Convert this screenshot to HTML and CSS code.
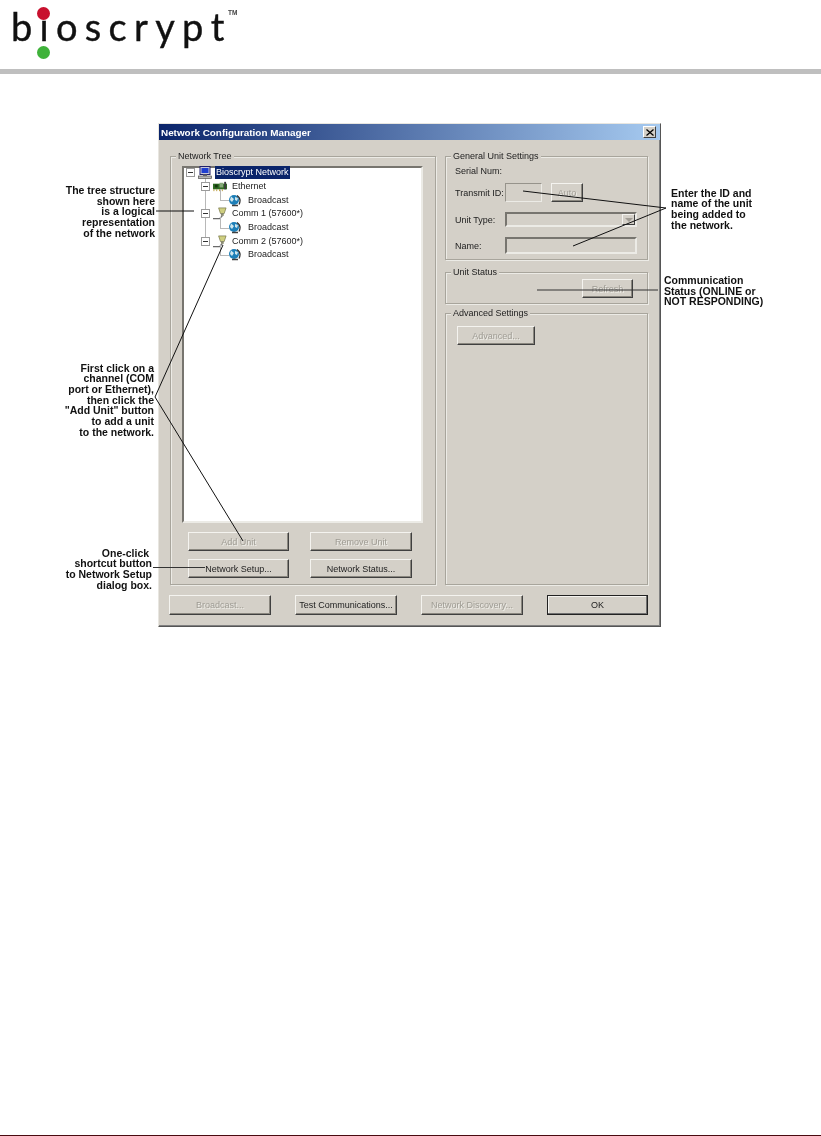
FILE: index.html
```html
<!DOCTYPE html>
<html lang="en">
<head>
    <meta charset="UTF-8">
    <meta name="viewport" content="width=device-width, initial-scale=1.0">
    <title>Network Configuration Manager</title>
    <link rel="stylesheet" href="styles.css">
</head>
<body>
<div class="page">
    <svg class="icon-defs" width="0" height="0">
        <symbol id="icon-computer" viewBox="0 0 14 13">
            <rect x="2" y="0.5" width="10" height="8" fill="#c8c8d8" stroke="#20206a"/>
            <rect x="3.5" y="2" width="7" height="5" fill="#1f3fd0"/>
            <rect x="5" y="8.5" width="4" height="1.5" fill="#707070"/>
            <rect x="0.5" y="10" width="13" height="2.5" fill="#b8b8b8" stroke="#505050" stroke-width="0.7"/>
        </symbol>
        <symbol id="icon-card" viewBox="0 0 15 10">
            <rect x="0" y="2" width="15" height="6" fill="#2e6b22"/>
            <rect x="2" y="3" width="3" height="3" fill="#14360f"/>
            <rect x="7" y="1" width="4" height="5" fill="#85a878"/>
            <rect x="12" y="0" width="2" height="8" fill="#3b3b3b"/>
            <path d="M1 8v2M4 8v2M7 8v2M10 8v2" stroke="#b99a36"/>
        </symbol>
        <symbol id="icon-plug" viewBox="0 0 15 13">
            <path d="M6 0.500h8l-2 6h-4z" fill="#cfcf80" stroke="#6f6f40" stroke-width="0.7"/>
            <rect x="8.500" y="6" width="3" height="3" fill="#8a8a70"/>
            <path d="M10 9 7 12H0" fill="none" stroke="#6a6a6a" stroke-width="1.300"/>
        </symbol>
        <symbol id="icon-globe" viewBox="0 0 14 13">
            <circle cx="6" cy="6" r="5" fill="#1d7fb8"/>
            <path d="M3 2.500 6 5 4 8 2 6zM7 3l3 1-1 3-2-1z" fill="#cfe6ee"/>
            <path d="M9 1.500c3 2 4 5 2 9" fill="none" stroke="#2a2a2a" stroke-width="1.200"/>
            <path d="M4 11.500h6" stroke="#404040" stroke-width="1.500"/>
        </symbol>
    </svg>

    <header class="brand">
        <div class="logo">
            <span class="logo-word">bioscryp<span class="logo-end">t</span></span>
            <span class="logo-dot logo-dot-red"></span>
            <span class="logo-dot logo-dot-green"></span>
            <span class="logo-tm">TM</span>
        </div>
    </header>

    <main class="figure">
        <div class="dialog">
            <div class="titlebar">
                <span class="title">Network Configuration Manager</span>
                <span class="close">
                    <svg width="8" height="7" viewBox="0 0 8 7"><path d="M0.500 0.500 7.500 6.500M7.500 0.500 0.500 6.500" stroke="#000" stroke-width="1.300"/></svg>
                </span>
            </div>
            <div class="dialog-body">
                <div class="columns">
                    <section class="group group-tree">
                        <span class="legend">Network Tree</span>
                        <div class="tree">
                            <ul class="tree-list">
                                <li class="node level-1">
                                    <span class="toggle"></span>
                                    <svg class="node-icon"><use href="#icon-computer"/></svg>
                                    <span class="node-label selected">Bioscrypt Network</span>
                                </li>
                                <li class="node level-2">
                                    <span class="toggle"></span>
                                    <svg class="node-icon"><use href="#icon-card"/></svg>
                                    <span class="node-label">Ethernet</span>
                                </li>
                                <li class="node level-3">
                                    <svg class="node-icon"><use href="#icon-globe"/></svg>
                                    <span class="node-label">Broadcast</span>
                                </li>
                                <li class="node level-2">
                                    <span class="toggle"></span>
                                    <svg class="node-icon"><use href="#icon-plug"/></svg>
                                    <span class="node-label">Comm 1 (57600*)</span>
                                </li>
                                <li class="node level-3">
                                    <svg class="node-icon"><use href="#icon-globe"/></svg>
                                    <span class="node-label">Broadcast</span>
                                </li>
                                <li class="node level-2">
                                    <span class="toggle"></span>
                                    <svg class="node-icon"><use href="#icon-plug"/></svg>
                                    <span class="node-label">Comm 2 (57600*)</span>
                                </li>
                                <li class="node level-3">
                                    <svg class="node-icon"><use href="#icon-globe"/></svg>
                                    <span class="node-label">Broadcast</span>
                                </li>
                            </ul>
                        </div>
                        <div class="tree-buttons">
                            <button class="btn" disabled>Add Unit</button>
                            <button class="btn" disabled>Remove Unit</button>
                            <button class="btn">Network Setup...</button>
                            <button class="btn">Network Status...</button>
                        </div>
                    </section>

                    <div class="side">
                        <section class="group group-general">
                            <span class="legend">General Unit Settings</span>
                            <div class="field field-serial"><label class="field-label">Serial Num:</label></div>
                            <div class="field field-transmit">
                                <label class="field-label">Transmit ID:</label>
                                <span class="input input-id"></span>
                                <button class="btn btn-auto" disabled>Auto</button>
                            </div>
                            <div class="field field-type">
                                <label class="field-label">Unit Type:</label>
                                <span class="input input-combo"><span class="combo-arrow"></span></span>
                            </div>
                            <div class="field field-name">
                                <label class="field-label">Name:</label>
                                <span class="input input-name"></span>
                            </div>
                        </section>
                        <section class="group group-status">
                            <span class="legend">Unit Status</span>
                            <button class="btn btn-refresh" disabled>Refresh</button>
                        </section>
                        <section class="group group-advanced">
                            <span class="legend">Advanced Settings</span>
                            <button class="btn btn-advanced" disabled>Advanced...</button>
                        </section>
                    </div>
                </div>
                <div class="dialog-buttons">
                    <button class="btn" disabled>Broadcast...</button>
                    <button class="btn">Test Communications...</button>
                    <button class="btn" disabled>Network Discovery...</button>
                    <button class="btn btn-default">OK</button>
                </div>
            </div>
        </div>
    </main>

    <!-- callouts sit on top of the screenshot -->
    <p class="note note-tree">The tree structure<br>shown here<br>is a logical<br>representation<br>of the network</p>
    <p class="note note-click">First click on a<br>channel (COM<br>port or Ethernet),<br>then click the<br>"Add Unit" button<br>to add a unit<br>to the network.</p>
    <p class="note note-shortcut">One-click&nbsp;<br>shortcut button<br>to Network Setup<br>dialog box.</p>
    <p class="note note-enter">Enter the ID and<br>name of the unit<br>being added to<br>the network.</p>
    <p class="note note-comm">Communication<br>Status (ONLINE or<br>NOT RESPONDING)</p>

    <svg class="leaders" viewBox="0 0 821 1136">
        <path d="M156 211H194"/>
        <path d="M155 397 223 245"/>
        <path d="M155 397 243 541"/>
        <path class="leader-soft" d="M153 567.500H205"/>
        <path d="M666 208 523 191"/>
        <path d="M666 208 573 246"/>
        <path class="leader-soft" d="M537 290H658"/>
    </svg>

    <footer class="page-foot"></footer>
</div>
</body>
</html>
```

FILE: styles.css
```css
* {
    box-sizing: border-box;
}

body {
    margin: 0;
    background: #fff;
    font-family: "Liberation Sans", Arial, sans-serif;
}

.page {
    position: relative;
    width: 821px;
    height: 1136px;
    display: flex;
    flex-direction: column;
    overflow: hidden;
}

.icon-defs {
    position: absolute;
}

/* logo + grey rule */
.brand {
    height: 74px;
    border-bottom: 5px solid #bfbfbf;
    padding-left: 11px;
}

.logo {
    position: relative;
    width: 240px;
    height: 69px;
    filter: blur(0.4px);
}

.logo-word {
    display: inline-block;
    font-family: Lato, sans-serif;
    font-size: 38px;
    line-height: 52px;
    letter-spacing: 7.300px;
    color: #111;
    -webkit-text-stroke: 0.4px #111;
}

.logo-end {
    letter-spacing: 0;
}

.logo-dot {
    position: absolute;
    left: 26px;
    width: 13px;
    height: 13px;
    border-radius: 50%;
}

.logo-dot-red {
    top: 7px;
    background: #c8102e;
}

.logo-dot-green {
    top: 46px;
    background: #3fb23a;
}

.logo-tm {
    position: absolute;
    left: 217px;
    top: 9px;
    font-size: 6.500px;
    font-weight: bold;
    color: #444;
}

/* dialog */
.figure {
    flex: 1;
    padding: 49px 0 0 158px;
}

.dialog {
    width: 503px;
    height: 504px;
    background: #d4d0c8;
    border: 1px solid;
    border-color: #e8e6e0 #555 #555 #e8e6e0;
    box-shadow: inset -1px -1px #808080;
    font-size: 9px;
    color: #222;
    filter: blur(0.45px);
}

.titlebar {
    height: 16px;
    display: flex;
    align-items: center;
    justify-content: space-between;
    padding: 0 4px 0 2px;
    background: linear-gradient(90deg, #0a246a, #a6caf0);
}

.title {
    font-size: 9.900px;
    font-weight: bold;
    color: #fff;
}

.close {
    width: 13px;
    height: 12px;
    display: flex;
    align-items: center;
    justify-content: center;
    background: #d4d0c8;
    border: 1px solid;
    border-color: #fff #404040 #404040 #fff;
}

.dialog-body {
    padding: 16px 0 0 11px;
}

.columns {
    display: flex;
    gap: 9px;
    height: 429px;
}

.group {
    position: relative;
    border: 1px solid #a8a59c;
    box-shadow: 1px 1px #ecebe6, inset 1px 1px #ecebe6;
}

.legend {
    position: absolute;
    top: -7px;
    left: 5px;
    padding: 0 2px;
    line-height: 12px;
    background: #d4d0c8;
}

.group-tree {
    width: 266px;
    padding: 9px 12px 0 11px;
}

.tree {
    position: relative;
    height: 357px;
    background: #fff;
    border: 2px solid;
    border-color: #77756f #ecebe6 #ecebe6 #77756f;
}

/* long dotted trunk joining the channels */
.tree::before {
    content: "";
    position: absolute;
    left: 21px;
    top: 8px;
    height: 66px;
    border-left: 1px solid #b8b8b8;
}

.tree-list {
    position: relative;
    list-style: none;
    margin: -2px 0 0;
    padding: 0;
}

.node {
    position: relative;
    height: 13.650px;
    display: flex;
    align-items: center;
    white-space: nowrap;
}

.level-1 {
    padding-left: 2px;
}

.level-2 {
    padding-left: 17px;
}

.level-3 {
    padding-left: 44px;
}

.level-3::before {
    content: "";
    position: absolute;
    left: 36px;
    top: -4px;
    width: 8px;
    height: 11px;
    border-left: 1px solid #b8b8b8;
    border-bottom: 1px solid #b8b8b8;
}

.toggle {
    position: relative;
    width: 9px;
    height: 9px;
    flex: none;
    background: #fff;
    border: 1px solid #9a9a9a;
}

.toggle::after {
    content: "";
    position: absolute;
    left: 1px;
    top: 3px;
    width: 5px;
    height: 1px;
    background: #333;
}

.node-icon {
    width: 14px;
    height: 13px;
    flex: none;
    margin-left: 3px;
}

.level-3 .node-icon {
    margin-left: 0;
}

.node-label {
    margin-left: 4px;
    padding: 0 1px;
    line-height: 13px;
}

.level-1 .node-label {
    margin-left: 3px;
}

.level-3 .node-label {
    margin-left: 5px;
}

.selected {
    background: #0a246a;
    color: #fff;
}

.tree-buttons {
    display: grid;
    grid-template-columns: 101px 102px;
    column-gap: 21px;
    row-gap: 8px;
    margin: 9px 0 0 6px;
}

.btn {
    height: 19px;
    padding: 0;
    font: inherit;
    color: #222;
    background: #d4d0c8;
    border: 1px solid;
    border-color: #f4f3ef #404040 #404040 #f4f3ef;
    box-shadow: inset -1px -1px #8a877f;
}

.btn:disabled {
    color: #9f9c94;
    text-shadow: 1px 1px #efeee9;
}

.side {
    width: 203px;
    display: flex;
    flex-direction: column;
}

.group-general {
    height: 104px;
    padding: 8px 10px 0 9px;
}

.field {
    display: flex;
    align-items: center;
}

.field-label {
    width: 50px;
    flex: none;
    white-space: nowrap;
}

.field-serial {
    height: 12px;
    margin-bottom: 6px;
}

.field-transmit {
    height: 19px;
    margin-bottom: 10px;
}

.field-type {
    height: 15px;
    margin-bottom: 10px;
}

.field-name {
    height: 17px;
}

.input {
    position: relative;
    display: block;
    height: 100%;
    border: 2px solid;
    border-color: #77756f #ecebe6 #ecebe6 #77756f;
}

.input-id {
    width: 37px;
    border-width: 1px;
    border-color: #96938b #ecebe6 #ecebe6 #96938b;
}

.input-combo {
    width: 133px;
}

.input-name {
    width: 134px;
}

.combo-arrow {
    position: absolute;
    right: 0;
    top: 0;
    width: 13px;
    height: 11px;
    background: #d4d0c8;
    border: 1px solid;
    border-color: #f4f3ef #404040 #404040 #f4f3ef;
}

.combo-arrow::after {
    content: "";
    position: absolute;
    left: 2px;
    top: 3px;
    border: 4px solid transparent;
    border-top-color: #a09c94;
    border-bottom: 0;
}

.btn-auto {
    width: 32px;
    margin-left: 9px;
}

.group-status {
    height: 32px;
    margin-top: 12px;
    padding: 6px 14px 0 0;
    text-align: right;
}

.btn-refresh {
    width: 51px;
}

.group-advanced {
    flex: 1;
    margin-top: 9px;
    padding: 12px 0 0 11px;
}

.btn-advanced {
    width: 78px;
}

.dialog-buttons {
    display: flex;
    gap: 24px;
    margin: 10px 0 0 -1px;
}

.dialog-buttons .btn {
    width: 102px;
    height: 20px;
}

.dialog-buttons .btn-default {
    width: 101px;
    border: 1px solid #222;
    box-shadow: inset -1px -1px #707070, inset 1px 1px #f4f3ef;
}

/* callouts */
.note {
    position: absolute;
    margin: 0;
    font-size: 10.500px;
    font-weight: bold;
    line-height: 10.700px;
    color: #111;
    filter: blur(0.3px);
}

.note-tree {
    top: 185px;
    right: 666px;
    text-align: right;
}

.note-click {
    top: 362.500px;
    right: 667px;
    text-align: right;
}

.note-shortcut {
    top: 547.500px;
    right: 669px;
    text-align: right;
}

.note-enter {
    top: 187.500px;
    left: 671px;
}

.note-comm {
    top: 275px;
    left: 664px;
}

.leaders {
    position: absolute;
    left: 0;
    top: 0;
    width: 821px;
    height: 1136px;
    fill: none;
    stroke: #111;
    stroke-width: 1;
    pointer-events: none;
}

.leader-soft {
    stroke: #333;
}

.page-foot {
    height: 1px;
    background: #4a0a10;
}
```
